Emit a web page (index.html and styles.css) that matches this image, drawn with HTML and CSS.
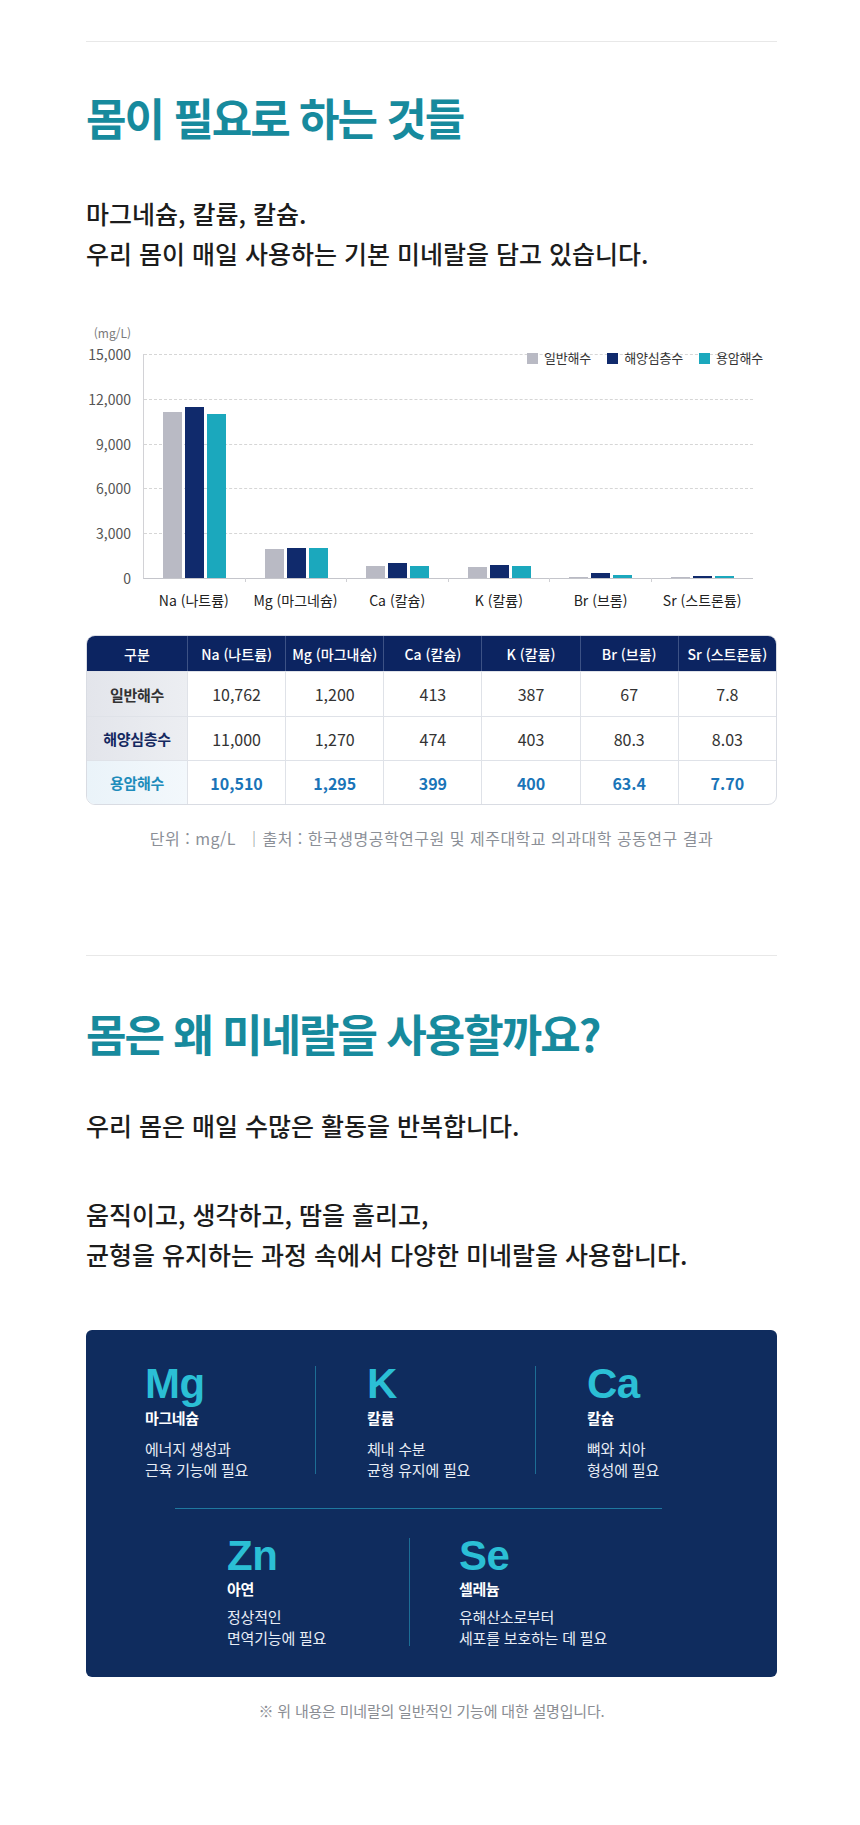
FILE: index.html
```html
<!DOCTYPE html>
<html lang="ko">
<head>
<meta charset="utf-8">
<title>몸이 필요로 하는 것들</title>
<link rel="stylesheet" href="styles.css">
</head>
<body>
<main class="page">
  <section class="sec sec-one">
    <hr class="divider">
    <h2 class="title">몸이 필요로 하는 것들</h2>
    <p class="lead">마그네슘, 칼륨, 칼슘.<br>우리 몸이 매일 사용하는 기본 미네랄을 담고 있습니다.</p>

    <div class="chart">
      <div class="unit">(mg/L)</div>
      <div class="unit-spacer"></div>
      <div class="ticks">
        <span>15,000</span><span>12,000</span><span>9,000</span><span>6,000</span><span>3,000</span><span>0</span>
      </div>
      <div class="plot">
        <div class="gridlines"><div></div><div></div><div></div><div></div><div></div></div>
        <div class="bars">
          <div class="group"><i class="bar c-gray" style="height:166px"></i><i class="bar c-navy" style="height:171px"></i><i class="bar c-teal" style="height:164px"></i></div>
          <div class="group"><i class="bar c-gray" style="height:29px"></i><i class="bar c-navy" style="height:30px"></i><i class="bar c-teal" style="height:30px"></i></div>
          <div class="group"><i class="bar c-gray" style="height:12px"></i><i class="bar c-navy" style="height:15px"></i><i class="bar c-teal" style="height:12px"></i></div>
          <div class="group"><i class="bar c-gray" style="height:11px"></i><i class="bar c-navy" style="height:13px"></i><i class="bar c-teal" style="height:12px"></i></div>
          <div class="group"><i class="bar c-gray" style="height:1px"></i><i class="bar c-navy" style="height:5px"></i><i class="bar c-teal" style="height:3px"></i></div>
          <div class="group"><i class="bar c-gray" style="height:1px"></i><i class="bar c-navy" style="height:2px"></i><i class="bar c-teal" style="height:2px"></i></div>
        </div>
        <ul class="legend">
          <li><i class="sw c-gray"></i>일반해수</li>
          <li><i class="sw c-navy"></i>해양심층수</li>
          <li><i class="sw c-teal"></i>용암해수</li>
        </ul>
      </div>
      <div class="x-labels">
        <span>Na (나트륨)</span><span>Mg (마그네슘)</span><span>Ca (칼슘)</span><span>K (칼륨)</span><span>Br (브롬)</span><span>Sr (스트론튬)</span>
      </div>
    </div>

    <table class="data">
      <colgroup>
        <col class="c-first"><col><col><col><col><col><col>
      </colgroup>
      <thead>
        <tr><th>구분</th><th>Na (나트륨)</th><th>Mg (마그내슘)</th><th>Ca (칼슘)</th><th>K (칼륨)</th><th>Br (브롬)</th><th>Sr (스트론튬)</th></tr>
      </thead>
      <tbody>
        <tr class="r-normal"><th>일반해수</th><td>10,762</td><td>1,200</td><td>413</td><td>387</td><td>67</td><td>7.8</td></tr>
        <tr class="r-deep"><th>해양심층수</th><td>11,000</td><td>1,270</td><td>474</td><td>403</td><td>80.3</td><td>8.03</td></tr>
        <tr class="r-lava"><th>용암해수</th><td>10,510</td><td>1,295</td><td>399</td><td>400</td><td>63.4</td><td>7.70</td></tr>
      </tbody>
    </table>
    <p class="source">단위 : mg/L &nbsp;｜출처 : 한국생명공학연구원 및 제주대학교 의과대학 공동연구 결과</p>
  </section>

  <section class="sec sec-two">
    <hr class="divider">
    <h2 class="title">몸은 왜 미네랄을 사용할까요?</h2>
    <p class="text t-first">우리 몸은 매일 수많은 활동을 반복합니다.</p>
    <p class="text t-second">움직이고, 생각하고, 땀을 흘리고,<br>균형을 유지하는 과정 속에서 다양한 미네랄을 사용합니다.</p>

    <div class="card">
      <div class="row row-top">
        <div class="item">
          <div class="sym">Mg</div>
          <div class="name">마그네슘</div>
          <p class="desc">에너지 생성과<br>근육 기능에 필요</p>
        </div>
        <span class="vline"></span>
        <div class="item pad">
          <div class="sym">K</div>
          <div class="name">칼륨</div>
          <p class="desc">체내 수분<br>균형 유지에 필요</p>
        </div>
        <span class="vline"></span>
        <div class="item pad">
          <div class="sym">Ca</div>
          <div class="name">칼슘</div>
          <p class="desc">뼈와 치아<br>형성에 필요</p>
        </div>
      </div>
      <div class="hline"></div>
      <div class="row row-bottom">
        <div class="item">
          <div class="sym">Zn</div>
          <div class="name">아연</div>
          <p class="desc">정상적인<br>면역기능에 필요</p>
        </div>
        <span class="vline"></span>
        <div class="item pad">
          <div class="sym">Se</div>
          <div class="name">셀레늄</div>
          <p class="desc">유해산소로부터<br>세포를 보호하는 데 필요</p>
        </div>
      </div>
    </div>
    <p class="foot">※ 위 내용은 미네랄의 일반적인 기능에 대한 설명입니다.</p>
  </section>
</main>
</body>
</html>
```

FILE: styles.css
```css
html, body {
  margin: 0;
  padding: 0;
  background: #ffffff;
}

body {
  font-family: "Noto Sans CJK KR", "Noto Sans", sans-serif;
  color: #1c1c1c;
}

.page {
  width: 691px;
  margin-left: 86px;
  padding-top: 41px;
  padding-bottom: 100px;
}

.divider {
  margin: 0;
  border: 0;
  height: 1px;
  background: #e8e8e8;
}

.title {
  margin: 49px 0 0;
  font-size: 44px;
  line-height: 52px;
  font-weight: 700;
  letter-spacing: -2px;
  color: #178a9d;
}

.lead {
  margin: 50px 0 0;
  font-size: 25px;
  line-height: 40px;
  font-weight: 500;
  color: #1c1c1c;
}

/* ---------- chart ---------- */
.chart {
  margin-top: 52px;
  display: grid;
  grid-template-columns: 57px 610px;
  grid-template-rows: auto auto auto;
}

.unit {
  grid-column: 1;
  grid-row: 1;
  text-align: right;
  padding-right: 12px;
  font-size: 12px;
  line-height: 16px;
  color: #7a7a7a;
  margin-bottom: 13px;
}

.unit-spacer {
  grid-column: 2;
  grid-row: 1;
}

.ticks {
  grid-column: 1;
  grid-row: 2;
  height: 240px;
  margin: -8px 0;
  display: flex;
  flex-direction: column;
  justify-content: space-between;
  align-items: flex-end;
  padding-right: 12px;
  font-size: 14px;
  line-height: 16px;
  color: #555;
}

.plot {
  grid-column: 2;
  grid-row: 2;
  position: relative;
  height: 224px;
  border-left: 1px solid #d2d2d6;
  border-bottom: 1px solid #c4c5cb;
}

.gridlines {
  height: 100%;
  display: flex;
  flex-direction: column;
}

.gridlines div {
  flex: 1;
  border-top: 1px dashed #d6d6d6;
}

.bars {
  position: absolute;
  inset: 0;
  display: flex;
}

.group {
  position: relative;
  flex: 1;
  display: flex;
  align-items: flex-end;
  justify-content: center;
  gap: 3px;
}

.group::after {
  content: "";
  position: absolute;
  right: 0;
  bottom: -4px;
  width: 1px;
  height: 4px;
  background: #d0d0d4;
}

.group:last-child::after {
  display: none;
}

.bar {
  display: block;
  width: 19px;
}

.c-gray { background: #b9bac4; }
.c-navy { background: #102a6c; }
.c-teal { background: #1ba8bd; }

.legend {
  position: absolute;
  top: -4px;
  right: -10px;
  margin: 0;
  padding: 0;
  list-style: none;
  display: flex;
  gap: 16px;
  font-size: 13px;
  line-height: 16px;
  color: #333;
  letter-spacing: -0.2px;
}

.legend li {
  display: flex;
  align-items: center;
  gap: 6px;
}

.sw {
  display: block;
  width: 11px;
  height: 11px;
}

.x-labels {
  grid-column: 2;
  grid-row: 3;
  margin-top: 12px;
  display: flex;
  font-size: 14px;
  line-height: 18px;
  color: #222;
}

.x-labels span {
  flex: 1;
  text-align: center;
  white-space: nowrap;
}

/* ---------- table ---------- */
.data {
  margin-top: 26px;
  width: 691px;
  table-layout: fixed;
  border-collapse: separate;
  border-spacing: 0;
  border: 1px solid #d9dce3;
  border-radius: 9px;
  overflow: hidden;
  font-size: 16px;
  text-align: center;
}

.c-first { width: 100px; }

.data thead th {
  height: 35px;
  padding: 0;
  background: #0c2461;
  color: #ffffff;
  font-size: 14px;
  font-weight: 500;
  white-space: nowrap;
  border-left: 1px solid #3d5285;
}

.data thead th:first-child {
  border-left: 0;
}

.data tbody th,
.data tbody td {
  height: 43px;
  padding: 0;
  border-top: 1px solid #dfe2e8;
  border-left: 1px solid #dfe2e8;
  color: #333;
  font-weight: 400;
}

.data tbody th {
  border-left: 0;
  font-size: 15px;
  font-weight: 600;
  letter-spacing: -0.3px;
  background: linear-gradient(90deg, #e3e5eb, #eceef2);
}

.data tbody tr.r-normal th,
.data tbody tr.r-normal td {
  height: 44px;
}

.r-deep th {
  color: #14285f !important;
  font-weight: 700 !important;
}

.r-lava th {
  color: #1e8cbb !important;
  font-weight: 600;
  background: linear-gradient(90deg, #eaf3f9, #f3f8fc) !important;
}

.r-lava td {
  color: #1a74b8 !important;
  font-weight: 700 !important;
}

.source {
  margin: 23px 0 0;
  text-align: center;
  font-size: 16px;
  line-height: 20px;
  color: #8b8f97;
  letter-spacing: 0.5px;
}

/* ---------- section two ---------- */
.sec-two {
  margin-top: 107px;
}

.sec-two .title {
  margin-top: 51px;
}

.text {
  margin: 0;
  font-size: 25px;
  line-height: 40px;
  font-weight: 500;
  color: #1c1c1c;
}

.t-first { margin-top: 46px; }
.t-second { margin-top: 49px; }

.card {
  margin-top: 56px;
  background: #0f2c5e;
  border-radius: 6px;
  padding: 36px 0 29px;
  color: #ffffff;
}

.row {
  display: flex;
  align-items: flex-start;
}

.row-top {
  margin-left: 59px;
}

.row-top .item:first-child { width: 170px; }
.row-top .item.pad:nth-of-type(2) { width: 168px; }

.row-bottom {
  margin-left: 141px;
  margin-top: 29px;
}

.row-bottom .item:first-child { width: 182px; }

.item.pad {
  padding-left: 51px;
}

.row-bottom .item.pad {
  padding-left: 49px;
}

.vline {
  display: block;
  width: 1px;
  height: 108px;
  background: #1d6e95;
  flex: none;
}

.sym {
  font-family: "Liberation Sans", Arial, sans-serif;
  font-size: 42px;
  line-height: 36px;
  font-weight: 700;
  color: #2bbfd5;
  letter-spacing: -0.5px;
}

.name {
  margin-top: 6px;
  font-size: 15px;
  line-height: 20px;
  font-weight: 700;
  letter-spacing: -0.4px;
}

.desc {
  margin: 10px 0 0;
  font-size: 15px;
  line-height: 21px;
  color: #e8edf5;
  white-space: nowrap;
  letter-spacing: -0.2px;
}

.row-bottom .name { margin-top: 5px; }
.row-bottom .desc { margin-top: 7px; }

.hline {
  margin: 28px 0 0 89px;
  width: 487px;
  height: 1px;
  background: #1f789f;
}

.foot {
  margin: 24px 0 0;
  text-align: center;
  font-size: 15px;
  line-height: 20px;
  color: #8a8d93;
  letter-spacing: -0.2px;
}
```
